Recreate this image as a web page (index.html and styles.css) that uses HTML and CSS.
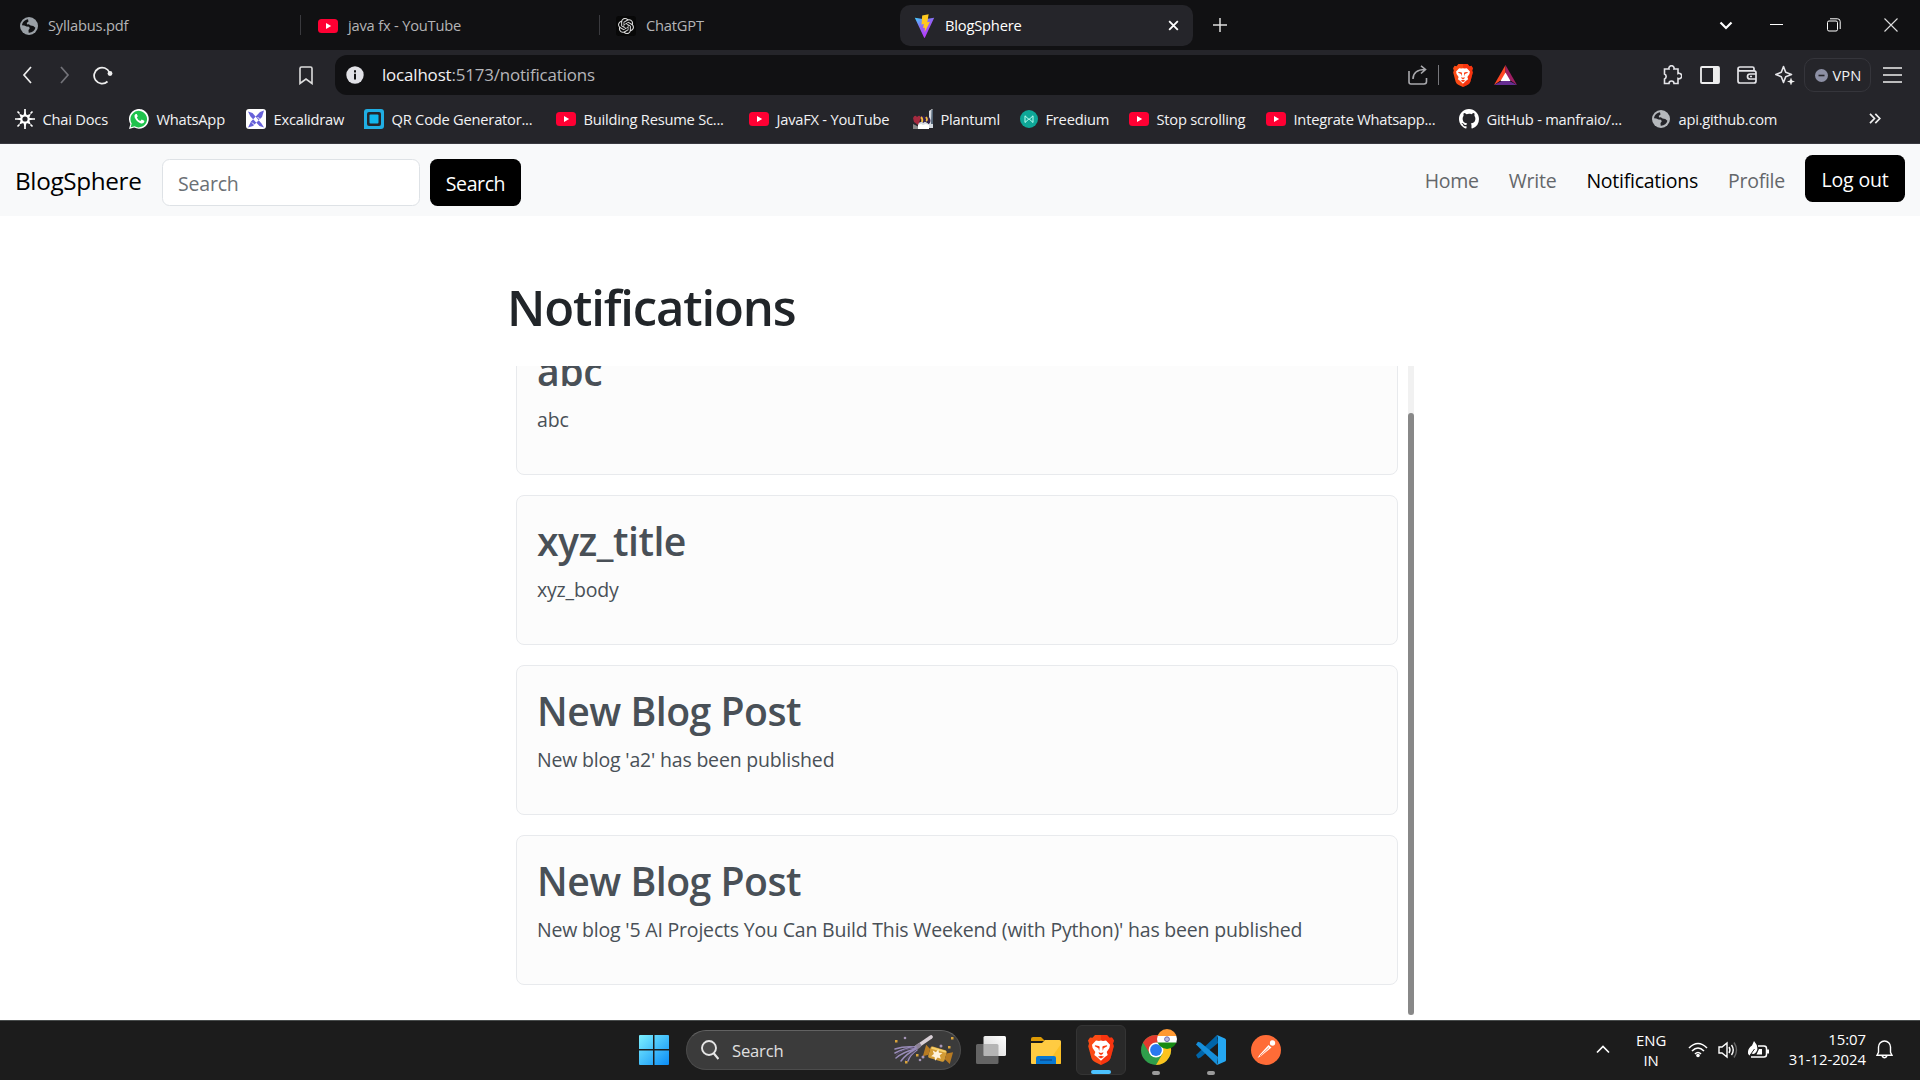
FILE: index.html
```
<!DOCTYPE html>
<html lang="en">
<head>
<meta charset="utf-8">
<title>BlogSphere</title>
<link rel="stylesheet" href="styles.css">
</head>
<body>
<svg class="defs" width="0" height="0">
  <symbol id="globe" viewBox="0 0 18 18"><circle cx="9" cy="9" r="9" fill="currentColor"/><path d="M8 2.200C5 2.600 2.300 5 2 8.300l2.300.1 2.200 1.200 2.600.2.600 1.600-1.200 1.500.2 2.800c3.400.2 6-2 6.700-4.900L13.300 9l-2.700-.5-1.800-1.300-1.600.2-.5-1.500L8.500 4.500z" fill="var(--hole)"/></symbol>
  <symbol id="yt" viewBox="0 0 20 14"><rect width="20" height="14" rx="3.500" fill="#ff0033"/><path d="M8 4v6l5.200-3z" fill="#fff"/></symbol>
  <symbol id="lion" viewBox="0 0 26 30"><path d="M7 0h12l2.500 2.800 2.500-.4 2 3.200-1 3 .8 2.600-3.200 11.800c-.5 1.500-1.600 2.800-4 4.300L13 30l-5.600-2.700c-2.400-1.500-3.500-2.800-4-4.300L.2 11.200l.8-2.600-1-3 2-3.200 2.500.4z" fill="#fb4b15"/><path d="M19 0l2.500 2.800 2.500-.4 2 3.200-1 3 .8 2.600-3.200 11.800c-.5 1.500-1.600 2.800-4 4.300L13 30V0z" fill="#f51d0a" opacity=".5"/><path d="M8 5.500l3 .5 2-.4 2 .4 3-.5 4 4.200-.6 3.300-2.700 4 1 3-2.700 2-4 3.800-4-3.800-2.700-2 1-3L4.600 13 4 9.700z" fill="#fff"/><path d="M7 10.300l3.700.6 1 .9-.5 4.200-.8-2.800-3.600-1.900zM19 10.300l-3.700.6-1 .9.500 4.200.8-2.800 3.600-1.900zM10.500 17.300l2.500.7 2.500-.7-.7 1.700-1.800.9-1.800-.9zM9.800 21.700l3.200-1 3.200 1-3.200 1.700z" fill="#fb3b12"/></symbol>
</svg>

<header class="browser">
  <div class="tabs">
    <div class="tab"><svg class="i18"><use href="#globe"/></svg><span>Syllabus.pdf</span></div>
    <div class="tab split"><svg class="iyt"><use href="#yt"/></svg><span>java fx - YouTube</span></div>
    <div class="tab split gpt"><svg class="i20" viewBox="0 0 30 30"><rect width="30" height="30" rx="4" fill="#080808"/><path transform="translate(3 3)" fill="#dcdcdc" d="M22.282 9.821a5.985 5.985 0 0 0-.516-4.910 6.046 6.046 0 0 0-6.510-2.900A6.065 6.065 0 0 0 4.981 4.182a5.985 5.985 0 0 0-3.998 2.900 6.046 6.046 0 0 0 .743 7.097 5.980 5.980 0 0 0 .510 4.911 6.051 6.051 0 0 0 6.515 2.900A5.985 5.985 0 0 0 13.260 24a6.056 6.056 0 0 0 5.772-4.206 5.990 5.990 0 0 0 3.998-2.900 6.056 6.056 0 0 0-.748-7.073zM13.260 22.430a4.476 4.476 0 0 1-2.876-1.040l.141-.081 4.779-2.758a.795.795 0 0 0 .393-.681v-6.737l2.020 1.169a.071.071 0 0 1 .038.052v5.583a4.504 4.504 0 0 1-4.495 4.493zM3.600 18.304a4.471 4.471 0 0 1-.535-3.014l.142.085 4.783 2.759a.771.771 0 0 0 .781 0l5.843-3.369v2.332a.080.080 0 0 1-.033.062L9.740 19.950a4.500 4.500 0 0 1-6.140-1.646zM2.341 7.896a4.485 4.485 0 0 1 2.366-1.973V11.600a.766.766 0 0 0 .388.677l5.815 3.354-2.020 1.169a.076.076 0 0 1-.071 0l-4.830-2.787A4.504 4.504 0 0 1 2.341 7.872zM18.937 11.752l-5.833-3.388L15.119 7.200a.076.076 0 0 1 .071 0l4.830 2.791a4.494 4.494 0 0 1-.676 8.105v-5.678a.790.790 0 0 0-.407-.667zM20.948 8.729l-.142-.085-4.774-2.782a.776.776 0 0 0-.785 0L9.409 9.230V6.897a.066.066 0 0 1 .028-.061l4.830-2.787a4.500 4.500 0 0 1 6.680 4.660zM8.307 12.863l-2.020-1.164a.080.080 0 0 1-.038-.057V6.075a4.500 4.500 0 0 1 7.376-3.454l-.142.081L8.704 5.460a.795.795 0 0 0-.393.681zM9.404 10.498l2.602-1.500 2.607 1.500v2.999l-2.597 1.500-2.607-1.500z"/></svg><span>ChatGPT</span></div>
    <div class="tab active">
      <svg class="vite" viewBox="0 0 21 26"><defs><linearGradient id="vg" x1="0" y1="0" x2=".6" y2="1"><stop stop-color="#41d1ff"/><stop offset=".5" stop-color="#9263f5"/><stop offset="1" stop-color="#bd34fe"/></linearGradient></defs><path d="M0 4l10.500 1.600L21 4 11 25.500q-.5.800-1 0z" fill="url(#vg)"/><path d="M15 .3L8 1.700 7.300 11.300l2.500-.5-.8 4.500 2-.5-.5 5L16.500 8.500l-3 .5z" fill="#ffc91f"/></svg>
      <span>BlogSphere</span>
      <svg class="close" viewBox="0 0 12 12"><path d="M2 2l8 8m0-8l-8 8" stroke="#fff" stroke-width="1.700"/></svg>
    </div>
    <svg class="plus" viewBox="0 0 14 14"><path d="M7 0v14M0 7h14" stroke="#ddd" stroke-width="1.500"/></svg>
    <div class="window-controls">
      <svg width="14" height="9" viewBox="0 0 14 9"><path d="M1.500 1.500L7 7l5.500-5.500" fill="none" stroke="#fff" stroke-width="2.200"/></svg>
      <svg width="13" height="14" viewBox="0 0 13 14"><path d="M0 6.500h13" stroke="#fff"/></svg>
      <svg width="14" height="14" viewBox="0 0 14 14" fill="none" stroke="#fff"><rect x=".5" y="3" width="10" height="10" rx="1.500"/><path d="M3 .8h7.500q2.700 0 2.700 2.700V11"/></svg>
      <svg width="14" height="14" viewBox="0 0 14 14"><path d="M.5.5l13 13m0-13l-13 13" stroke="#ddd" stroke-width="1.100"/></svg>
    </div>
  </div>

  <div class="toolbar">
    <div class="history">
      <svg width="10" height="18" viewBox="0 0 10 18"><path d="M9 1L2 9l7 8" fill="none" stroke="#eee" stroke-width="1.700"/></svg>
      <svg width="10" height="18" viewBox="0 0 10 18"><path d="M1 1l7 8-7 8" fill="none" stroke="#737379" stroke-width="1.700"/></svg>
      <svg width="20" height="19" viewBox="0 0 20 19"><path d="M16.500 6.500A8 8 0 1 0 14.500 15.500" fill="none" stroke="#eee" stroke-width="1.800"/><circle cx="17" cy="7.500" r="2.400" fill="#eee"/></svg>
      <svg class="mark" width="14" height="19" viewBox="0 0 14 19"><path d="M1 17.500V2.500Q1 1 2.500 1h9Q13 1 13 2.500v15L7 13z" fill="none" stroke="#ddd" stroke-width="1.600"/></svg>
    </div>
    <div class="address">
      <svg width="18" height="18" viewBox="0 0 18 18"><circle cx="9" cy="9" r="8.700" fill="#e2e2e7"/><path d="M9 4.200v2.200M9 7.800v5.700" stroke="#111" stroke-width="2"/></svg>
      <span class="url">localhost<i>:5173/notifications</i></span>
      <svg width="20" height="20" viewBox="0 0 20 20" fill="none" stroke="#a9a9ad" stroke-width="1.600"><path d="M1 6v11q0 2 2 2h13q2.500 0 2.500-2.500V13M5 14c0-6 4-9.500 12-9.500M13 .8l4.500 3.700L13 8.500"/></svg>
      <b class="rule"></b>
      <svg width="20" height="23"><use href="#lion"/></svg>
      <svg class="bat" width="23" height="20" viewBox="0 0 23 20"><path d="M11.500 0L0 20l11.500-8z" fill="#ff4724"/><path d="M11.500 0L23 20l-11.500-8z" fill="#9e1f63"/><path d="M0 20h23l-11.500-6z" fill="#662d91"/><path d="M11.500 7.500l5 8.500h-10z" fill="#fff"/></svg>
    </div>
    <div class="tools">
      <svg width="20" height="20" viewBox="0 0 20 20" fill="none" stroke="#e4e4e8" stroke-width="1.600"><path d="M2.500 4H7a2.600 2.600 0 1 1 5 0h4v4.500a2.700 2.700 0 1 1 0 5V18.500h-4a2.500 2.500 0 0 0-5 0H2.500v-4.500a2.700 2.700 0 0 0 0-5z"/></svg>
      <svg width="20" height="18" viewBox="0 0 20 18"><rect x="1" y="1" width="18" height="16" rx="1" fill="none" stroke="#eee" stroke-width="1.800"/><path d="M13 1h6v16h-6z" fill="#eee"/></svg>
      <svg width="20" height="18" viewBox="0 0 20 18" fill="none" stroke="#e4e4e8" stroke-width="1.700"><path d="M17 5V2.500Q17 1 15.500 1H3Q1 1 1 3q0 1.800 2 1.800h14q2 0 2 2V15q0 2-2 2H3q-2 0-2-2V3M19 8h-6q-2.500 0-2.500 2.500T13 13h6"/><path d="M13 10.500h2"/></svg>
      <svg width="20" height="20" viewBox="0 0 20 20"><path d="M8.500 1.500l2.200 5.800L16.500 9.500l-5.800 2.200-2.200 5.800-2.200-5.800L.8 9.500l5.500-2.200z" fill="none" stroke="#e4e4e8" stroke-width="1.600" stroke-linejoin="round"/><path d="M16 12.500l1.100 2.900L20 16.500l-2.900 1.100L16 20.500l-1.100-2.900-2.900-1.100 2.900-1.100z" fill="#eee"/></svg>
      <div class="vpn"><svg width="13" height="13" viewBox="0 0 13 13"><circle cx="6.500" cy="6.500" r="6.500" fill="#8d90a5"/><path d="M3.500 6.500h6" stroke="#25252a" stroke-width="1.600"/></svg><span>VPN</span></div>
      <svg width="19" height="16" viewBox="0 0 19 16"><path d="M0 1h19M0 8h19M0 15h19" stroke="#eee" stroke-width="1.500"/></svg>
    </div>
  </div>

  <nav class="bookmarks">
    <a><svg class="i20 chai" viewBox="0 0 20 20"><path d="M10 0v20M0 10h20" stroke="#fff" stroke-width="1.700"/><path d="M10 2.500l1.800 3.700 4-1.500-1.500 4L18 10l-3.700 1.500 1.500 4-4-1.500L10 18l-1.800-4-4 1.500 1.500-4L2 10l3.700-1.300-1.500-4 4 1.500z" fill="#fff"/><circle cx="10" cy="10" r="2.600" fill="#25252a"/><path d="M2.500 2.500l2 2M17.500 2.500l-2 2M17.500 17.500l-2-2M2.500 17.500l2-2" stroke="#fff" stroke-width="1.700"/></svg>Chai Docs</a>
    <a><svg class="i20" viewBox="0 0 20 20"><path d="M0 20l1.400-5A9.900 9.900 0 1 1 5.200 18.600z" fill="#fff"/><path d="M1.700 18.300l1-3.800a8.300 8.300 0 1 1 2.900 2.800z" fill="#20c34d"/><path d="M6.600 5q-1.800 1.200-.9 3.500 2 4.500 6.300 5.900 2.700.5 3.300-1.600v-1l-2.600-1.200-1.300 1.500Q8.900 11.200 7.800 8.500l1-1.300L7.800 5z" fill="#fff"/></svg>WhatsApp</a>
    <a><svg class="i20" viewBox="0 0 20 20"><rect width="20" height="20" rx="3" fill="#fff"/><path d="M2 2.500l4.500 1.500 9 10.500 2.500 4-4.500-1.500-9-9.500zM18 1.500l-4 1.500-9 9.500L2 18.500l5-1.500 9-9z" fill="#6661d9"/><path d="M6 13.500l2.500 2.500M11.500 8l3.500 3.500" stroke="#fff" stroke-width="1"/></svg>Excalidraw</a>
    <a><svg class="i20" viewBox="0 0 20 20"><path d="M3 0h14q3 0 3 3v14q0 3-3 3H0V3Q0 0 3 0z" fill="#20aee3"/><rect x="3" y="3" width="14" height="14" rx="2" fill="#25252a"/><rect x="5.500" y="5.500" width="9" height="9" rx="1" fill="#11b7ed"/></svg>QR Code Generator...</a>
    <a><svg class="iyt"><use href="#yt"/></svg>Building Resume Sc...</a>
    <a><svg class="iyt"><use href="#yt"/></svg>JavaFX - YouTube</a>
    <a><svg class="i20" viewBox="0 0 20 20"><path d="M16 2l3-2 1 1v18H5v-5l6-2 5 3z" fill="#d5dae0"/><path d="M18.500 1h1.500v14h-2z" fill="#567"/><path d="M0 9q2-4 4-1 3-3 4 1l-3 7-4-3z" fill="#a52a3f"/><path d="M7 8q4-3 6 1l3-1q3 4 0 7l-3-3-3 2z" fill="#332250"/><path d="M8 8q2 2 1 5m4-5q2 3 0 4" fill="none" stroke="#f5bd3c" stroke-width="1.800"/><path d="M0 15l6 3v2H0z" fill="#888"/><path d="M5 16l3-1 2 1 3-1 3 1v4H5z" fill="#fff"/></svg>Plantuml</a>
    <a><svg class="i18" viewBox="0 0 18 18"><circle cx="9" cy="9" r="9" fill="#0ea797"/><path d="M5 12.500V5.800l4 3.700 4-3.700v6.700L9 8.800z" fill="none" stroke="#b9fff2" stroke-width="1"/></svg>Freedium</a>
    <a><svg class="iyt"><use href="#yt"/></svg>Stop scrolling</a>
    <a><svg class="iyt"><use href="#yt"/></svg>Integrate Whatsapp...</a>
    <a><svg class="i20" viewBox="0 0 16 16"><path fill="#fff" d="M8 0C3.580 0 0 3.580 0 8c0 3.540 2.290 6.530 5.470 7.590.4.070.55-.17.55-.38 0-.19-.01-.82-.01-1.490-2.010.37-2.530-.49-2.690-.94-.09-.23-.48-.94-.82-1.130-.28-.15-.68-.52-.01-.53.63-.01 1.080.58 1.230.82.72 1.210 1.870.87 2.330.66.07-.52.28-.87.51-1.070-1.780-.2-3.640-.89-3.640-3.950 0-.87.31-1.590.82-2.150-.08-.2-.36-1.020.08-2.120 0 0 .67-.21 2.200.82A7.650 7.650 0 0 1 8 3.860c.68 0 1.360.09 2 .27 1.530-1.040 2.200-.82 2.200-.82.44 1.100.16 1.920.08 2.120.51.56.82 1.270.82 2.150 0 3.070-1.870 3.750-3.650 3.950.29.25.54.73.54 1.480 0 1.070-.01 1.930-.01 2.200 0 .21.15.46.55.38A8.010 8.010 0 0 0 16 8c0-4.420-3.580-8-8-8z"/></svg>GitHub - manfraio/...</a>
    <a class="pale"><svg class="i18"><use href="#globe"/></svg>api.github.com</a>
    <a><svg width="12" height="11" viewBox="0 0 12 11"><path d="M1 .8l4.500 4.700L1 10.200M6.300.8l4.500 4.700-4.500 4.700" fill="none" stroke="#eee" stroke-width="1.700"/></svg></a>
  </nav>
</header>

<main class="page">
  <nav class="navbar">
    <a class="brand">BlogSphere</a>
    <form class="search"><input type="search" placeholder="Search"><button type="button">Search</button></form>
    <div class="links"><a>Home</a><a>Write</a><a class="current">Notifications</a><a>Profile</a></div>
    <button type="button" class="logout">Log out</button>
  </nav>
  <section class="content">
    <h1>Notifications</h1>
    <div class="scroller">
      <div class="list">
        <article><h2>abc</h2><p>abc</p></article>
        <article><h2>xyz_title</h2><p>xyz_body</p></article>
        <article><h2>New Blog Post</h2><p>New blog 'a2' has been published</p></article>
        <article><h2>New Blog Post</h2><p>New blog '5 AI Projects You Can Build This Weekend (with Python)' has been published</p></article>
      </div>
      <div class="track"><div class="thumb"></div></div>
    </div>
  </section>
</main>

<footer class="taskbar">
  <div class="apps">
    <svg class="start" width="30" height="30" viewBox="0 0 30 30"><defs><linearGradient id="wg" x1="0" y1="0" x2="1" y2="1"><stop stop-color="#7df1ff"/><stop offset="1" stop-color="#0a8cf5"/></linearGradient></defs><path d="M0 1q0-1 1-1h13v14H0zM15.500 0H29q1 0 1 1v13H15.500zM0 15.500h14V30H1q-1 0-1-1zM15.500 15.500H30V29q0 1-1 1H15.500z" fill="url(#wg)"/></svg>
    <div class="tasksearch">
      <svg width="18" height="20" viewBox="0 0 18 20"><circle cx="8" cy="8" r="7" fill="#4a4a4a" stroke="#e6e6e6" stroke-width="1.900"/><path d="M12.500 13l5 6" stroke="#e6e6e6" stroke-width="2.200"/></svg>
      <span>Search</span>
      <svg width="60" height="30" viewBox="0 0 60 30"><g stroke-linecap="round"><path d="M21 13L37 2" stroke="#d8cfd6" stroke-width="3.600"/><path d="M23 12l2-1.500" stroke="#8d8297" stroke-width="4.500"/><g fill="none" stroke="#988bb8" stroke-width="1.500"><path d="M22 12Q10 11 1 14M22 13Q9 13 1 18M21 14Q9 17 2 23M22 14Q12 19 7 26M23 15Q16 20 14 26"/></g><path d="M20 12.500Q9 14 2 20M22 15q-7 5-11 11" stroke="#5b5070" fill="none"/></g><g transform="rotate(16 43 19)"><rect x="35" y="13" width="17" height="12" rx="2" fill="#d39b34"/><path d="M35 16l-5-3v12l5-3zM52 16l6-3v12l-6-3z" fill="#b87b22"/><path d="M36 14.500h15" stroke="#f5d06c" stroke-width="2"/><path d="M43 14l1.500 3.200 3.500-.7-2 3 2 3-3.500-.4L43 26l-1.500-3.500-3.500.4 2-3-2-3 3.500.7z" fill="#fff3dc"/></g><g fill="#d9a43b"><rect x="1" y="5" width="2.500" height="2.500"/><rect x="57" y="2" width="2.500" height="2.500"/><rect x="54" y="11" width="2.500" height="2.500"/><rect x="22" y="19" width="2.500" height="2.500"/><rect x="11" y="26" width="2.500" height="2.500"/></g><g fill="#a696b8"><circle cx="11" cy="3" r="1.300"/><circle cx="47" cy="11" r="1.500"/><circle cx="29" cy="22" r="1.500"/><circle cx="26" cy="25" r="1.300"/></g></svg>
    </div>
    <div class="app"><svg width="30" height="28" viewBox="0 0 30 28"><defs><linearGradient id="tv" x1="0" x2="1" y1="1" y2="0"><stop stop-color="#d5d5d5"/><stop offset="1" stop-color="#fff"/></linearGradient></defs><rect x="7.500" width="22.500" height="20" rx="1.500" fill="url(#tv)"/><path d="M0 9.500Q0 8 1.500 8h6v12h15v6.500q0 1.500-1.500 1.500H1.500Q0 28 0 26.500z" fill="#646464"/><path d="M7.500 8H21q1.500 0 1.500 1.500V20h-15z" fill="#b5b5b5"/></svg></div>
    <div class="app"><svg width="30" height="27" viewBox="0 0 30 27"><path d="M0 2q0-2 2-2h8l4 4H0z" fill="#dd9a05"/><path d="M0 6h11l3-3h14.500Q30 3 30 4.500V26q0 1-1 1H1q-1 0-1-1z" fill="#ffcb42"/><path d="M30 7v19q0 1-1 1H16z" fill="#f9b915" opacity=".65"/><path d="M5 27v-6q0-2 2-2h16q2 0 2 2v6z" fill="#0878d2"/><path d="M9 23h12" stroke="#0c4387" stroke-width="1.200"/></svg></div>
    <div class="app running selected"><svg width="26" height="30"><use href="#lion"/></svg></div>
    <div class="app running"><svg class="chrome" width="36" height="36" viewBox="0 0 36 36"><g transform="translate(0 6)"><circle cx="15" cy="15" r="15" fill="#2f9e4b"/><path d="M2 7.500A15 15 0 0 1 28 7.500H15L9 19z" fill="#e33b2e"/><path d="M28 7.500A15 15 0 0 1 15 30L21.500 18.800 21 7.500z" fill="#fcc31e"/><circle cx="15" cy="15" r="7.400" fill="#fff"/><circle cx="15" cy="15" r="5.900" fill="#2879f0"/></g><clipPath id="fc"><circle cx="26" cy="10" r="10"/></clipPath><g clip-path="url(#fc)"><path d="M16 0h20v7H16z" fill="#ff9933"/><path d="M16 7h20v7H16z" fill="#fff"/><path d="M16 13.500h20V20H16z" fill="#178a14"/><circle cx="26" cy="10.200" r="2.400" fill="#b9b9e0" stroke="#6a6ab0"/></g></svg></div>
    <div class="app running"><svg width="30" height="30" viewBox="0 0 30 30"><path d="M0 20L21 0l1 8L4.500 22.500 2 23.500z" fill="#0065a9"/><path d="M4.500 7.500L2 6.700 0 9.500 21 30l1-8z" fill="#168fdb"/><path d="M21 0l8 3.500q1 .5 1 1.500v20q0 1-1 1.500L21 30l1-3V3z" fill="#25a7f2"/></svg></div>
    <div class="app"><svg width="30" height="30" viewBox="0 0 30 30"><circle cx="15" cy="15" r="15" fill="#ff6c37"/><path d="M6.500 23l2-3 9-10 3 2.500-10.500 8.500z" fill="#fff"/><circle cx="21.500" cy="8" r="2.700" fill="#fff"/><path d="M9 21l9-8.500" stroke="#ff6c37" stroke-width=".8"/></svg></div>
  </div>
  <div class="tray">
    <svg width="14" height="9" viewBox="0 0 14 9"><path d="M1 7.500l6-6 6 6" fill="none" stroke="#fff" stroke-width="1.700"/></svg>
    <div class="lang">ENG<br>IN</div>
    <svg class="wifi" width="20" height="16" viewBox="0 0 20 16"><path d="M1 6Q10-3 19 6M4 9Q10 3 16 9M7 12q3-3 6 0" fill="none" stroke="#fff" stroke-width="1.600"/><circle cx="10" cy="13.500" r="1.800" fill="#fff"/></svg>
    <svg class="volume" width="20" height="18" viewBox="0 0 20 18" fill="none" stroke="#fff" stroke-width="1.400"><path d="M1 6h3l5-4v14l-5-4H1zM11 6q2 3 0 6M13.500 4q3.500 5 0 10"/><path d="M16 1.500q5 7.500 0 15" stroke="#666"/></svg>
    <svg class="battery" width="21" height="18" viewBox="0 0 21 18"><path d="M10 5h6q2.500 0 2.500 2.500v6Q18.500 16 16 16H3" fill="none" stroke="#fff" stroke-width="1.500"/><path d="M18.500 8.500H21v4h-2.500zM8.500 13.500L11 8h3v5.500zM0 12.500q-.5-5 4-8L6 0q4.500 5 3 9.500-2 4.500-5.500 3L1.500 15z" fill="#fff"/><path d="M1.500 15l5-7" stroke="#1d1d1d"/></svg>
    <div class="clock">15:07<br>31-12-2024</div>
    <svg width="17" height="19" viewBox="0 0 17 19" fill="none" stroke="#fff" stroke-width="1.400"><path d="M1 15.300l1.500-3V7a6 6 0 0 1 12 0v5.300l1.500 3zM6 16q2.500 3.500 5 0"/></svg>
  </div>
</footer>
</body>
</html>
```
FILE: styles.css
```
* { box-sizing: border-box; }
html, body { margin: 0; width: 1920px; height: 1080px; overflow: hidden; }
body {
  display: flex; flex-direction: column;
  font-family: "Open Sans", "Noto Sans", sans-serif;
  font-size: 19.5px; letter-spacing: -.19px; background: #fff; color: #212529;
}
svg { display: block; flex: none; }
.defs { position: absolute; }
h1, h2, p { margin: 0; }

/* Browser chrome */
.browser { --hole: #111113; height: 144px; flex: none; background: #25252a; color: #f2f2f4; font-size: 14.700px; letter-spacing: -.2px; border-bottom: 1px solid #393940; line-height: 20px; white-space: nowrap; }
.i18 { width: 18px; height: 18px; color: #9aa0a6; }
.i20 { width: 20px; height: 20px; }
.iyt { width: 20px; height: 14px; }
.tabs { height: 50px; background: #111113; display: grid; grid-template-columns: 300px 299px 301px 293px 20px 14px 1fr; }
.tab { display: flex; align-items: center; gap: 10px; padding: 1px 0 0 20px; color: #b4b4b6; position: relative; }
.tab span { padding-bottom: 1px; }
.tab.split { padding-left: 18px; }
.tab.split.gpt { padding-left: 17px; }
.tab.split::before { content: ""; position: absolute; left: 0; top: 15px; width: 1px; height: 20px; background: #3a3a3e; }
.tab.active { background: #25252a; color: #fff; border-radius: 10px; margin: 5px 0 4px; padding: 0 13px 0 14px; }
.tab.active span { padding-bottom: 2px; }
.vite { width: 21px; height: 24px; }
.close { width: 13px; height: 13px; margin-left: auto; }
.plus { grid-column: 6; width: 14px; height: 14px; align-self: center; justify-self: center; }
.window-controls { display: flex; align-items: center; justify-content: flex-end; padding-right: 22px; gap: 43px; }
.window-controls svg:first-child { margin-right: -6px; }
.window-controls svg:nth-child(2) { margin-right: 1px; }
.toolbar { height: 50px; display: grid; grid-template-columns: 335px 1207px 1fr; align-items: center; }
.history { display: flex; align-items: center; padding-left: 22px; gap: 28px; }
.history svg:nth-child(3) { margin-left: -5px; }
.history .mark { margin-left: auto; margin-right: 22px; }
.address { height: 40px; border-radius: 12px; background: #111113; display: flex; align-items: center; padding: 0 25px 0 11px; font-size: 16.900px; letter-spacing: -.15px; }
.url { margin-left: 18px; margin-right: auto; padding-bottom: 1px; }
.url i { font-style: normal; color: #b6b6ba; }
.rule { width: 1px; height: 20px; background: #77777b; margin: 0 14px 0 10px; }
.bat { margin-left: 21px; }
.tools { display: flex; align-items: center; padding: 0 18px 0 120px; justify-content: space-between; }
.vpn { display: flex; align-items: center; justify-content: center; gap: 5px; width: 67px; height: 34px; border: 1px solid #35353b; border-radius: 10px; margin: 0 -6px 0 -8px; letter-spacing: 0; }
.bookmarks { --hole: #25252a; height: 37px; display: grid; padding-left: 15px; grid-template-columns: 114px 117px 118px 192px 193px 164px 107px 109px 137px 193px 193px 217px 1fr; letter-spacing: -.23px; }
.bookmarks a { display: flex; align-items: center; gap: 7.500px; }
.pale svg { color: #b5b8bc; margin-right: 1px; }

/* Site */
.page { height: 876px; flex: none; }
.navbar { height: 72px; background: #f8f9fa; display: flex; align-items: flex-start; padding: 11px 15px 0; line-height: 30px; }
.brand { font-size: 24.300px; color: #000; padding-top: 11px; width: 147px; letter-spacing: -.35px; }
.search { display: flex; gap: 10px; padding-top: 4px; }
.search input { width: 258px; height: 47px; border: 1px solid #dee2e6; border-radius: 7.500px; padding: 2px 15px 0; background: #fff; font: inherit; letter-spacing: inherit; outline: 0; }
.search input::placeholder { color: #6b7075; opacity: 1; }
.navbar button { height: 47px; border: 0; border-radius: 7.500px; background: #000; color: #fff; font: inherit; font-weight: 500; letter-spacing: -.02em; padding: 3px 0 0; width: 91px; }
.links { display: flex; gap: 30px; margin-left: auto; padding-top: 11px; color: #64676a; letter-spacing: -.25px; }
.links .current { color: #000; }
.navbar .logout { width: 100px; margin-left: 20px; letter-spacing: -.15px; }
.content { padding: 61px 0 0 507px; width: 1414px; }
h1 { font-size: 49px; font-weight: 600; letter-spacing: -1.150px; line-height: 60px; height: 89px; }
.scroller { display: flex; height: 654px; padding-left: 9px; }
.list { width: 882px; display: flex; flex-direction: column; gap: 20px; overflow: hidden; }
article { height: 150px; flex: none; background: #fcfcfc; border: 1px solid #e8eaed; border-radius: 8px; padding: 21px 20px; color: #495057; line-height: 30px; }
article:first-child { margin-top: -41px; }
h2 { font-size: 39.200px; font-weight: 600; letter-spacing: -.5px; line-height: 48px; margin-bottom: 10px; }
.track { width: 6px; margin-left: 10px; background: #f1f1f1; padding-top: 47px; height: 649px; }
.thumb { height: 602px; background: #888; border-radius: 3px; }

/* Taskbar */
.taskbar { height: 60px; flex: none; background: #1c1c1c; border-top: 1px solid #484c4c; color: #fff; display: grid; grid-template-columns: 1fr 336px; }
.apps { display: flex; align-items: center; padding: 0 0 1px 639px; }
.start { margin-right: 17px; }
.tasksearch { width: 275px; height: 40px; border-radius: 20px; border: 1px solid #4c4c4c; border-top-color: #626262; background: #3b3b3b; display: flex; align-items: center; padding: 0 6px 0 14px; font-size: 16.600px; color: #e0e0e0; margin-right: 3px; }
.tasksearch span { margin: 0 auto 0 13px; }
.app { width: 50px; height: 50px; margin-right: 5px; display: flex; align-items: center; justify-content: center; position: relative; border-radius: 6px; }
.apps > .app:nth-child(3) { margin-left: 2px; }
.selected { background: #292929; border: 1px solid #343434; }
.running::after { content: ""; position: absolute; bottom: 0; width: 8px; height: 4px; border-radius: 2px; background: #9b9b9b; }
.selected::after { width: 20px; background: #4cc2ff; }
.app .chrome { margin: -6px 0 0 6px; }
.tray { display: flex; align-items: center; padding: 0 27px 2px 12px; font-size: 14.900px; letter-spacing: -.05px; line-height: 20px; }
.lang { text-align: center; margin-left: 26px; }
.wifi { margin-left: 22px; }
.volume { margin: 0 10px; }
.battery { margin-right: -1px; }
.clock { text-align: right; margin-left: auto; margin-right: 10px; padding-bottom: 1px; }
```
